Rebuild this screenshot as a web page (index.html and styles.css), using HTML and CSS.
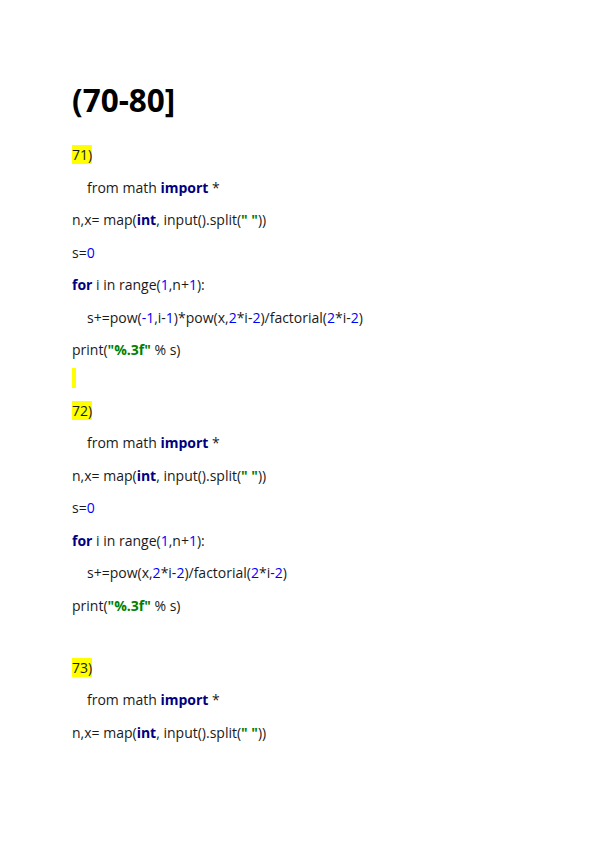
FILE: index.html
```html
<!DOCTYPE html>
<html>
<head>
<meta charset="utf-8">
<link rel="stylesheet" href="styles.css">
</head>
<body>
<div class="page">
  <h1 class="title">(70-80]</h1>

  <div class="ln"><span class="hl">71)</span></div>
  <div class="ln ind">from math <span class="kw">import</span> *</div>
  <div class="ln">n,x= map(<span class="kw">int</span>, input().split(<span class="str">" "</span>))</div>
  <div class="ln">s=<span class="num">0</span></div>
  <div class="ln"><span class="kw">for</span> i in range(<span class="num">1</span>,n+<span class="num">1</span>):</div>
  <div class="ln ind">s+=pow(<span class="num">-1</span>,i-<span class="num">1</span>)*pow(x,<span class="num">2</span>*i-<span class="num">2</span>)/factorial(<span class="num">2</span>*i-<span class="num">2</span>)</div>
  <div class="ln">print(<span class="str">"%.3f"</span> % s)</div>
  <div class="blank1"><span class="bar"></span></div>

  <div class="ln"><span class="hl">72)</span></div>
  <div class="ln ind">from math <span class="kw">import</span> *</div>
  <div class="ln">n,x= map(<span class="kw">int</span>, input().split(<span class="str">" "</span>))</div>
  <div class="ln">s=<span class="num">0</span></div>
  <div class="ln"><span class="kw">for</span> i in range(<span class="num">1</span>,n+<span class="num">1</span>):</div>
  <div class="ln ind">s+=pow(x,<span class="num">2</span>*i-<span class="num">2</span>)/factorial(<span class="num">2</span>*i-<span class="num">2</span>)</div>
  <div class="ln">print(<span class="str">"%.3f"</span> % s)</div>
  <div class="blank2"></div>

  <div class="ln"><span class="hl">73)</span></div>
  <div class="ln ind">from math <span class="kw">import</span> *</div>
  <div class="ln">n,x= map(<span class="kw">int</span>, input().split(<span class="str">" "</span>))</div>
</div>
</body>
</html>
```

FILE: styles.css
```css
html, body {
  margin: 0;
  padding: 0;
  background: #ffffff;
}
.page {
  padding: 79px 0 0 72px;
  font-family: "Open Sans", "Noto Sans", sans-serif;
  font-size: 14px;
  color: #1a1a1a;
}
.title {
  margin: 0 0 25px 0;
  font-size: 31.5px;
  line-height: 42px;
  font-weight: 700;
  color: #000000;
}
.ln {
  height: 18px;
  line-height: 18px;
  margin-bottom: 14.5px;
  white-space: pre;
}
.ind {
  padding-left: 15px;
}
.hl {
  background: #ffff00;
}
.kw {
  font-weight: 700;
  color: #000080;
}
.num {
  color: #0000ff;
}
.str {
  font-weight: 700;
  color: #008000;
}
.blank1 {
  height: 20px;
  margin-top: -6px;
  margin-bottom: 14px;
}
.bar {
  display: inline-block;
  width: 4px;
  height: 20px;
  background: #ffff00;
  vertical-align: top;
}
.blank2 {
  height: 16px;
  margin-bottom: 13.8px;
}
```
